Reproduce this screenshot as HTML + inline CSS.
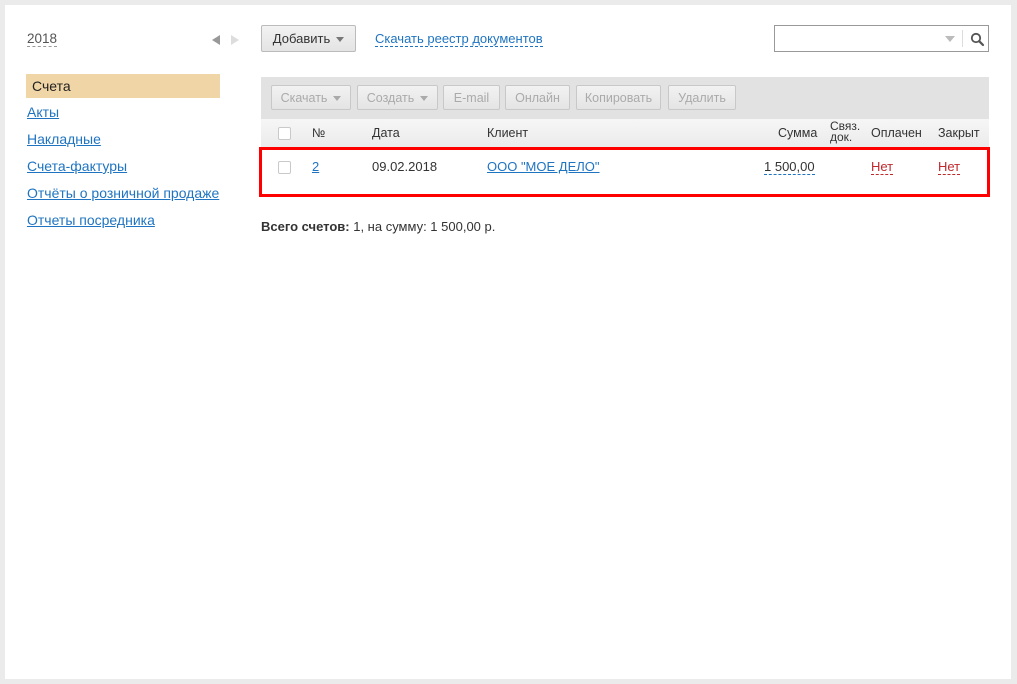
<!DOCTYPE html>
<html><head><meta charset="utf-8"><style>
*{margin:0;padding:0;box-sizing:border-box}
body{width:1017px;height:684px;background:#ebebeb;font-family:"Liberation Sans",Arial,sans-serif;font-size:13px;color:#333;position:relative;overflow:hidden}
.page{position:absolute;left:5px;top:5px;width:1006px;height:674px;background:#fff}
.a{position:absolute;white-space:nowrap}
.lnk{color:#1f74c1;text-decoration:underline}
.m{font-size:14px}
.dash{border-bottom:1px dashed #1f74c1;color:#1f74c1}
.btn{position:absolute;height:25px;border:1px solid #c8c8c8;border-radius:2px;background:linear-gradient(#f2f2f2,#e4e4e4);color:#aaa;line-height:24px;text-align:center;font-size:12.5px}
.tri{display:inline-block;width:0;height:0;border-left:4px solid transparent;border-right:4px solid transparent;border-top:5px solid #999;vertical-align:middle;margin-left:6px}
.cb{position:absolute;width:13px;height:13px;border:1px solid #c9c9c9;border-radius:2px;background:#fff}
.red{color:#c0282d;border-bottom:1px dashed #c0282d}
</style></head><body>
<div class="page"></div>
<div class="a" style="left:27px;top:31px;color:#555;border-bottom:1px dashed #999;line-height:15px;font-size:13.5px">2018</div>
<div class="a" style="left:212px;top:35px;width:0;height:0;border-top:5px solid transparent;border-bottom:5px solid transparent;border-right:8px solid #999"></div>
<div class="a" style="left:231px;top:35px;width:0;height:0;border-top:5px solid transparent;border-bottom:5px solid transparent;border-left:8px solid #ddd"></div>
<div class="btn" style="left:261px;top:25px;width:95px;height:27px;color:#333;line-height:25px;border-color:#bbb;font-size:13px">Добавить<span class="tri" style="border-top-color:#777"></span></div>
<div class="a dash" style="left:375px;top:31px;line-height:15px">Скачать реестр документов</div>
<div class="a" style="left:774px;top:25px;width:215px;height:27px;border:1px solid #999;background:#fff"></div>
<div class="a" style="left:945px;top:36px;width:0;height:0;border-left:5px solid transparent;border-right:5px solid transparent;border-top:6px solid #bbb"></div>
<div class="a" style="left:962px;top:30px;width:1px;height:17px;background:#ddd"></div>
<svg class="a" style="left:970px;top:32px" width="15" height="15" viewBox="0 0 15 15"><circle cx="6" cy="6" r="4.2" fill="none" stroke="#555" stroke-width="1.8"/><path d="M9.2 9.2l3.8 3.8" stroke="#555" stroke-width="2.2" stroke-linecap="round"/></svg>

<div class="a" style="left:26px;top:74px;width:194px;height:24px;background:#f0d5a6"></div>
<div class="a m" style="left:32px;top:78px;color:#222">Счета</div>
<div class="a lnk m" style="left:27px;top:104px">Акты</div>
<div class="a lnk m" style="left:27px;top:131px">Накладные</div>
<div class="a lnk m" style="left:27px;top:158px">Счета-фактуры</div>
<div class="a lnk m" style="left:27px;top:185px">Отчёты о розничной продаже</div>
<div class="a lnk m" style="left:27px;top:212px">Отчеты посредника</div>

<div class="a" style="left:261px;top:77px;width:728px;height:42px;background:#e2e2e2"></div>
<div class="btn" style="left:271px;top:85px;width:80px">Скачать<span class="tri" style="border-top-color:#aaa"></span></div>
<div class="btn" style="left:357px;top:85px;width:81px">Создать<span class="tri" style="border-top-color:#aaa"></span></div>
<div class="btn" style="left:443px;top:85px;width:57px">E-mail</div>
<div class="btn" style="left:505px;top:85px;width:65px">Онлайн</div>
<div class="btn" style="left:576px;top:85px;width:85px">Копировать</div>
<div class="btn" style="left:668px;top:85px;width:68px">Удалить</div>

<div class="a" style="left:261px;top:119px;width:728px;height:29px;background:linear-gradient(#f6f6f6,#ebebeb)"></div>
<div class="cb" style="left:278px;top:127px"></div>
<div class="a" style="left:312px;top:126px;font-size:12.5px">№</div>
<div class="a" style="left:372px;top:126px;font-size:12.5px">Дата</div>
<div class="a" style="left:487px;top:126px;font-size:12.5px">Клиент</div>
<div class="a" style="left:778px;top:126px;font-size:12.5px">Сумма</div>
<div class="a" style="left:830px;top:121px;font-size:12px;line-height:11px">Связ.<br>док.</div>
<div class="a" style="left:871px;top:126px;font-size:12.5px">Оплачен</div>
<div class="a" style="left:938px;top:126px;font-size:12.5px">Закрыт</div>

<div class="a" style="left:259px;top:147px;width:731px;height:50px;border:3px solid #f00"></div>
<div class="cb" style="left:278px;top:161px"></div>
<div class="a lnk" style="left:312px;top:159px">2</div>
<div class="a" style="left:372px;top:159px">09.02.2018</div>
<div class="a lnk" style="left:487px;top:159px">ООО "МОЕ ДЕЛО"</div>
<div class="a" style="left:764px;top:159px;border-bottom:1px dashed #1f74c1;line-height:15px">1 500,00</div>
<div class="a red" style="left:871px;top:159px;line-height:15px">Нет</div>
<div class="a red" style="left:938px;top:159px;line-height:15px">Нет</div>

<div class="a" style="left:261px;top:219px;font-size:13px"><b>Всего счетов:</b> 1, на сумму: 1 500,00 р.</div>
</body></html>
